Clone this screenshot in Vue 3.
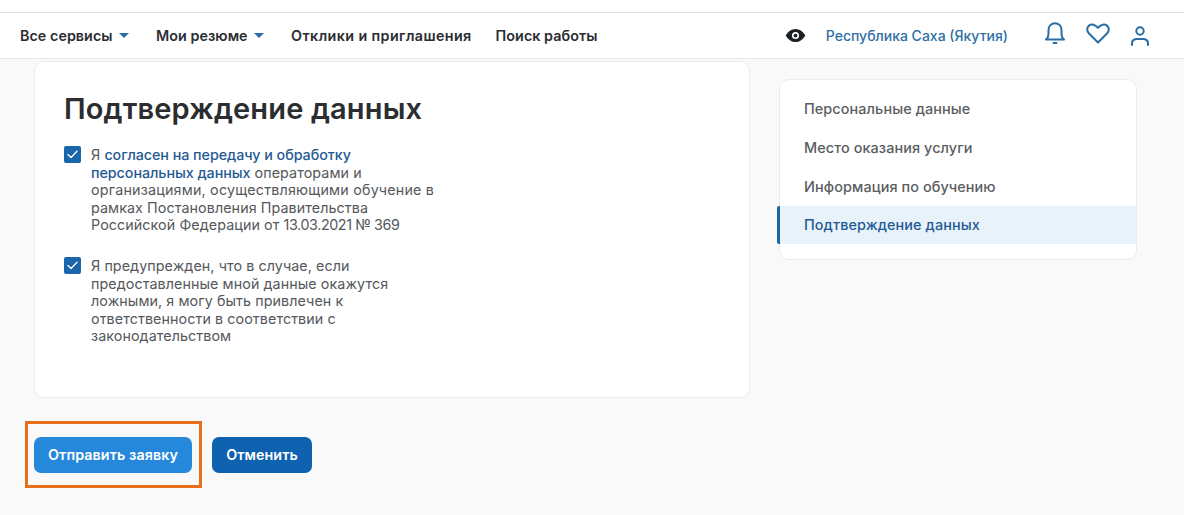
<script setup>
const menu = [
  { text: 'Все сервисы', arrow: true },
  { text: 'Мои резюме', arrow: true },
  { text: 'Отклики и приглашения', wide: true },
  { text: 'Поиск работы' },
]
const steps = ['Персональные данные', 'Место оказания услуги', 'Информация по обучению', 'Подтверждение данных']
</script>

<template>
  <div class="page">
    <header class="header">
      <nav class="nav">
        <a v-for="item in menu" :key="item.text" class="nav-item" :class="{ wide: item.wide }">
          {{ item.text }}
          <span v-if="item.arrow" class="arrow"></span>
        </a>
      </nav>
      <div class="header-right">
        <svg class="eye" width="21" height="15" viewBox="0 0 22 16">
          <path d="M0.5 8C3 3.5 6.5 1 11 1s8 2.500 10.500 7c-2.500 4.500-6 7-10.500 7S3 12.500 0.500 8z" fill="#1c1f24" />
          <circle cx="11" cy="8" r="3.800" fill="#fff" />
          <circle cx="11" cy="8" r="2" fill="#1c1f24" />
        </svg>
        <span class="region">Республика Саха (Якутия)</span>
        <div class="icons">
          <svg class="bell" width="22" height="24" viewBox="0 0 22 24" fill="none" stroke="#2a6ca6" stroke-width="2" stroke-linecap="round" stroke-linejoin="round">
            <path d="M2 18.500h18c-1.800-1.500-2.500-3-2.500-5.500V9c0-3.800-2.800-6.800-6.500-6.800S4.500 5.200 4.500 9v4c0 2.500-.7 4-2.500 5.500z" />
            <path d="M9.500 22h3" />
          </svg>
          <svg class="heart" width="24" height="21" viewBox="0 0 24 21" fill="none" stroke="#2a6ca6" stroke-width="2" stroke-linejoin="round">
            <path d="M12 19.500 3 10.500C.4 7.800.8 4.300 3 2.600c2.400-1.800 6.200-1.300 9 2.200 2.800-3.500 6.600-4 9-2.200 2.200 1.700 2.600 5.200 0 7.900z" />
          </svg>
          <svg width="20" height="20" viewBox="0 0 20 20" fill="none" stroke="#2a6ca6" stroke-width="2" stroke-linecap="round">
            <circle cx="10" cy="5" r="3.700" />
            <path d="M2 19v-1.500C2 14.500 4 13 7 13h6c3 0 5 1.500 5 4.500V19" />
          </svg>
        </div>
      </div>
    </header>

    <main class="content">
      <section class="card">
        <h1 class="title">Подтверждение данных</h1>
        <div class="check-row">
          <span class="checkbox">
            <svg width="11" height="9" viewBox="0 0 11 9" fill="none" stroke="#fff" stroke-width="1.300" stroke-linecap="round" stroke-linejoin="round"><path d="M1 4.500 4 7.500 10 1.200" /></svg>
          </span>
          <p class="check-text">Я <a class="link">согласен на передачу и обработку<br>персональных данных</a> операторами и<br><span class="long">организациями, осуществляющими обучение в</span><br>рамках Постановления Правительства<br>Российской Федерации от <span class="date">13.03.2021 № 369</span></p>
        </div>
        <div class="check-row">
          <span class="checkbox">
            <svg width="11" height="9" viewBox="0 0 11 9" fill="none" stroke="#fff" stroke-width="1.300" stroke-linecap="round" stroke-linejoin="round"><path d="M1 4.500 4 7.500 10 1.200" /></svg>
          </span>
          <p class="check-text">Я предупрежден, что в случае, если<br>предоставленные мной данные окажутся<br>ложными, я могу быть привлечен к<br>ответственности в соответствии с<br>законодательством</p>
        </div>
      </section>

      <aside class="side">
        <a v-for="(step, i) in steps" :key="step" class="step" :class="{ active: i === 3 }">{{ step }}</a>
      </aside>
    </main>

    <div class="actions">
      <div class="highlight">
        <button class="btn btn-light">Отправить заявку</button>
      </div>
      <button class="btn btn-dark">Отменить</button>
    </div>
  </div>
</template>

<style>
body {
  margin: 0;
  background: #f9f9f9;
}
</style>

<style scoped>
.page {
  width: 1184px;
  height: 515px;
  overflow: hidden;
  background: #f9f9f9;
  font-family: Inter, "Noto Sans", sans-serif;
  color: #2c2f33;
  padding-top: 12px;
  box-sizing: border-box;
}
.header {
  height: 47px;
  box-sizing: border-box;
  background: #fff;
  border-top: 1px solid #dedede;
  border-bottom: 1px solid #e8e8e8;
  display: flex;
  align-items: center;
  justify-content: space-between;
  padding: 0 34px 0 20px;
  box-shadow: 0 -12px 0 #fff;
}
.nav {
  display: flex;
  gap: 24px;
  padding-bottom: 1px;
}
.nav-item {
  font-size: 14.300px;
  letter-spacing: 0.050px;
  font-weight: 600;
  color: #2a2d31;
  display: flex;
  align-items: center;
  gap: 6px;
}
.nav-item.wide {
  letter-spacing: 0.400px;
}
.arrow {
  width: 0;
  height: 0;
  margin-right: 3.500px;
  border-left: 5px solid transparent;
  border-right: 5px solid transparent;
  border-top: 5px solid #2a6ca6;
}
.header-right {
  display: flex;
  align-items: center;
}
.eye {
  margin-right: 20px;
}
.region {
  font-size: 14px;
  font-weight: 500;
  color: #2f6fa5;
  margin-right: 36px;
}
.icons {
  display: flex;
  align-items: center;
  gap: 20px;
}
.icons svg {
  display: block;
}
.icons .bell {
  margin-bottom: 6px;
}
.icons .heart {
  margin-bottom: 5px;
}
.content {
  display: flex;
  align-items: flex-start;
  padding: 2px 47px 0 34px;
  gap: 29px;
}
.card {
  width: 716px;
  height: 337px;
  box-sizing: border-box;
  background: #fff;
  border: 1px solid #ececec;
  border-radius: 10px;
  padding: 28px 29px 0;
}
.title {
  margin: 0 0 18px;
  font-size: 29px;
  line-height: 38px;
  font-weight: 600;
  color: #2b2d30;
  letter-spacing: 0.150px;
}
.check-row {
  display: flex;
  gap: 10px;
  margin-bottom: 23.500px;
}
.checkbox {
  width: 17px;
  height: 17px;
  flex: none;
  border-radius: 2px;
  background: #1a66ab;
  display: flex;
  align-items: center;
  justify-content: center;
}
.check-text {
  margin: 0;
  font-size: 14.300px;
  letter-spacing: 0.080px;
  line-height: 17.500px;
  color: #55585c;
}
.long {
  letter-spacing: 0.200px;
}
.date {
  letter-spacing: -0.400px;
}
.link {
  color: #1f5a94;
  font-weight: 500;
  letter-spacing: -0.050px;
}
.side {
  width: 358px;
  height: 181px;
  margin-top: 18px;
  box-sizing: border-box;
  background: #fff;
  border: 1px solid #ececec;
  border-radius: 10px;
  padding-top: 9.500px;
  display: flex;
  flex-direction: column;
}
.step {
  height: 38.700px;
  display: flex;
  align-items: center;
  padding-left: 24px;
  font-size: 14.400px;
  letter-spacing: 0.100px;
  font-weight: 500;
  color: #5a5d61;
}
.step.active {
  background: #e8f2fa;
  color: #1f5a94;
  position: relative;
}
.step.active::before {
  content: "";
  position: absolute;
  left: -3px;
  top: 0;
  bottom: 0;
  width: 3px;
  border-radius: 2px 0 0 2px;
  background: #1a66ab;
}
.actions {
  display: flex;
  align-items: center;
  gap: 10px;
  padding: 23px 0 0 25px;
}
.highlight {
  box-sizing: border-box;
  width: 177px;
  height: 67px;
  border: 3px solid #e8701a;
  display: flex;
  align-items: center;
  padding-left: 6px;
}
.btn {
  height: 36px;
  border: 0;
  border-radius: 7px;
  color: #fff;
  font-family: inherit;
  font-size: 14.300px;
  letter-spacing: 0.080px;
  font-weight: 600;
  padding: 0;
}
.btn-light {
  width: 158px;
  background: #2588db;
}
.btn-dark {
  width: 100px;
  background: #0e62b0;
}
</style>
